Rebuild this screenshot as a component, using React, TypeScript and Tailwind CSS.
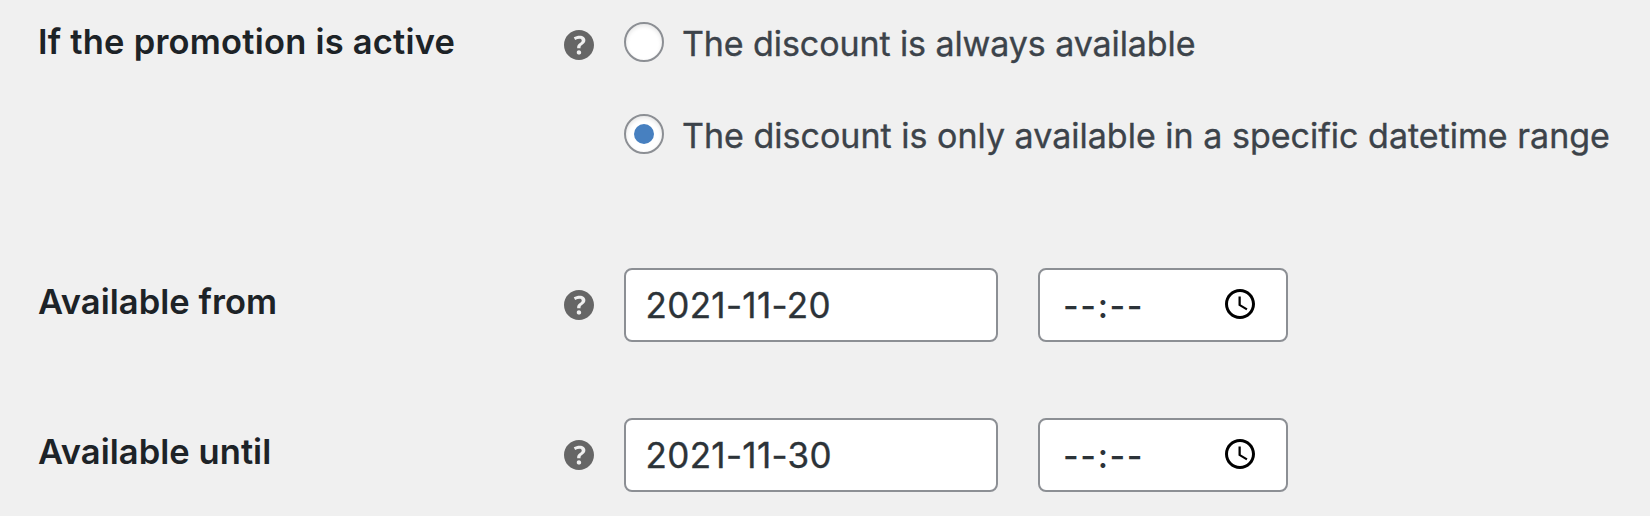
import { useState } from 'react';

interface DateTimeRowProps {
  label: string;
  date: string;
}

function HelpTip() {
  return (
    <svg viewBox="3 3 14 14" className="block h-[30px] w-[30px] shrink-0 fill-[#666666]" aria-hidden="true">
      <path d="M17 10c0-3.87-3.14-7-7-7-3.87 0-7 3.13-7 7s3.13 7 7 7c3.86 0 7-3.13 7-7zm-6.3 1.48H9.14v-.43c0-.38.08-.7.24-.98s.46-.57.88-.89c.41-.29.68-.53.81-.71.14-.18.2-.39.2-.62 0-.25-.09-.44-.28-.58-.19-.13-.45-.19-.79-.19-.58 0-1.25.19-2 .57l-.64-1.28c.87-.49 1.8-.74 2.77-.74.81 0 1.45.2 1.92.58.48.39.71.91.71 1.55 0 .43-.09.8-.29 1.11-.19.32-.57.67-1.11 1.06-.38.28-.61.49-.71.63-.1.15-.15.34-.15.57v.35zm-1.47 2.74c-.18-.17-.27-.42-.27-.73 0-.33.08-.58.26-.75s.43-.25.77-.25c.32 0 .57.09.75.26s.27.42.27.74c0 .3-.09.55-.27.72-.18.18-.43.27-.75.27-.33 0-.58-.09-.76-.26z" />
    </svg>
  );
}

function ClockIcon() {
  return (
    <svg viewBox="0 0 24 24" className="block h-9 w-9 fill-black" aria-hidden="true">
      <path d="M11.99 2C6.47 2 2 6.48 2 12s4.47 10 9.99 10C17.52 22 22 17.52 22 12S17.52 2 11.99 2zM12 20c-4.42 0-8-3.58-8-8s3.58-8 8-8 8 3.58 8 8-3.58 8-8 8z" />
      <path d="M12.5 7H11v6l5.25 3.15.75-1.23-4.5-2.67z" />
    </svg>
  );
}

function DateTimeRow({ label, date }: DateTimeRowProps) {
  return (
    <div className="flex h-[74px] items-start">
      <div className="w-[526px] pt-[12px] text-[34.5px] leading-[44px] font-semibold tracking-[0.05px] text-[#1d2327]">
        {label}
      </div>
      <div className="w-[60px] pt-[22px]">
        <HelpTip />
      </div>
      <div className="flex h-[74px] w-[374px] items-start rounded-lg border-2 border-[#8c8f94] bg-white pt-[13px] pl-[19.5px] text-[35px] leading-[44px] tracking-[0.35px] text-[#2c3338] [-webkit-text-stroke:0.35px]">
        {date}
      </div>
      <div className="ml-10 flex h-[74px] w-[250px] items-start justify-between rounded-lg border-2 border-[#8c8f94] bg-white pt-[16px] pr-7 pl-[23px] text-[34px] leading-[40px] font-medium tracking-[1.6px] text-[#2c3338]">
        <span>--:--</span>
        <ClockIcon />
      </div>
    </div>
  );
}

const options = [
  { value: 'always', label: 'The discount is always available', tracking: 'tracking-[-0.09px]' },
  {
    value: 'range',
    label: 'The discount is only available in a specific datetime range',
    tracking: 'tracking-[0.01px]',
  },
];

export default function App() {
  const [active, setActive] = useState('range');

  return (
    <div className="h-[516px] w-[1650px] overflow-hidden bg-[#f0f0f0] pt-[22px] pl-[38px] font-['Inter',sans-serif]">
      <div className="flex h-[246px] items-start">
        <div className="w-[526px] text-[34.5px] leading-[40px] font-semibold tracking-[0.22px] text-[#1d2327]">
          If the promotion is active
        </div>
        <div className="w-[60px] pt-2">
          <HelpTip />
        </div>
        <div className="flex flex-col gap-[52px]">
          {options.map((option) => (
            <label key={option.value} className="flex h-10 items-center">
              <span className="flex h-10 w-10 items-center justify-center rounded-full border-2 border-[#8c8f94] bg-white shadow-[inset_0_2px_4px_rgba(0,0,0,0.1)]">
                <input
                  type="radio"
                  name="availability"
                  checked={active === option.value}
                  onChange={() => setActive(option.value)}
                  className="h-5 w-5 appearance-none rounded-full checked:bg-[#4780c0]"
                />
              </span>
              <span
                className={`pt-1 pl-[18px] text-[34px] leading-[40px] whitespace-nowrap text-[#3c434a] [-webkit-text-stroke:0.35px] ${option.tracking}`}
              >
                {option.label}
              </span>
            </label>
          ))}
        </div>
      </div>
      <div className="flex flex-col gap-[76px]">
        <DateTimeRow label="Available from" date="2021-11-20" />
        <DateTimeRow label="Available until" date="2021-11-30" />
      </div>
    </div>
  );
}
